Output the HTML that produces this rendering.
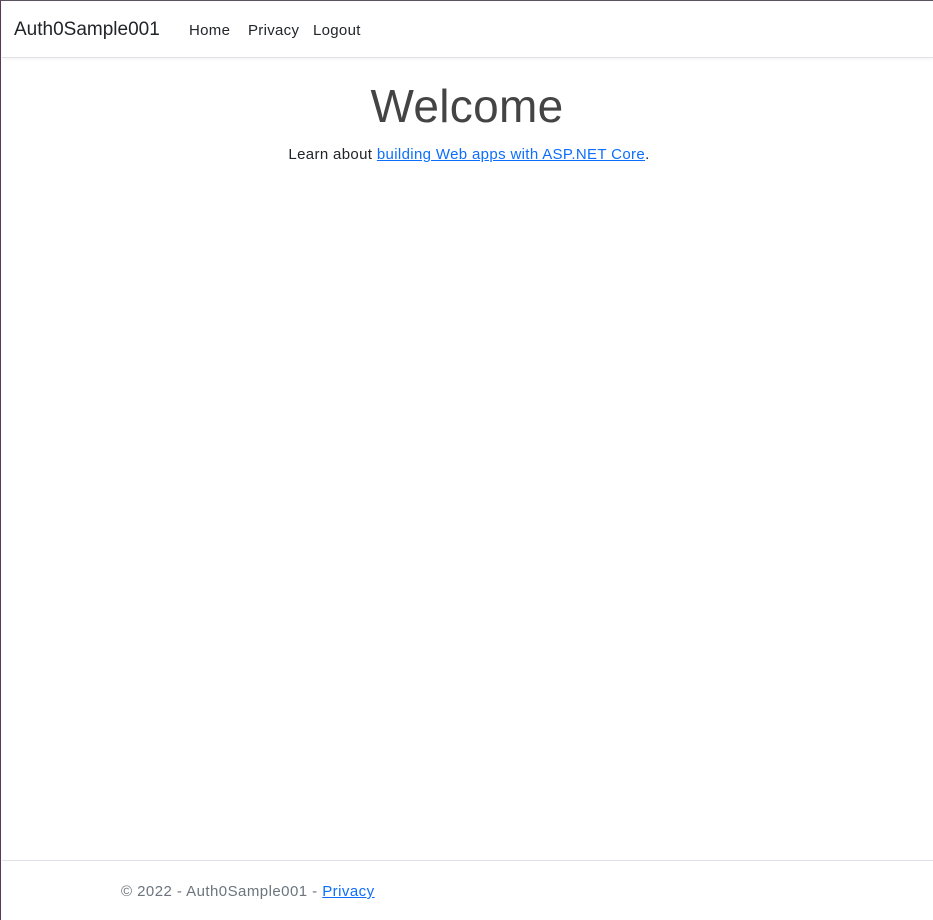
<!DOCTYPE html>
<html><head><style>
html,body{margin:0;padding:0;}
body{width:933px;height:920px;position:relative;overflow:hidden;background:#fff;font-family:"Liberation Sans",sans-serif;color:#212529;box-sizing:border-box;border-top:1px solid #5a5560;border-left:1px solid #5a3a55;}
.nav{position:absolute;top:1px;left:1px;right:0;height:55px;border-bottom:1px solid #dee2e6;box-shadow:0 1px 4px rgba(0,0,0,.06);}
.brand{position:absolute;left:12px;top:17px;font-size:19px;}
.links{position:absolute;left:187px;top:20px;font-size:15px;letter-spacing:0.3px;}
.links span{position:absolute;white-space:nowrap;}
h1{position:absolute;top:78px;left:0;right:0;text-align:center;font-weight:300;font-size:46px;margin:0;color:#444;letter-spacing:0.3px;}
.lead{position:absolute;top:145px;left:0;right:0;text-align:center;font-size:15px;letter-spacing:0.35px;padding-left:4px;}
a{color:#0d6efd;text-decoration:underline;}
.foot{position:absolute;top:859px;left:1px;right:0;border-top:1px solid #dee2e6;}
.ft{position:absolute;left:120px;top:882px;font-size:15px;color:#6c757d;letter-spacing:0.45px;}
</style></head><body>
<div class="nav"><div class="brand">Auth0Sample001</div><div class="links"><span style="left:0">Home</span><span style="left:59px">Privacy</span><span style="left:124px">Logout</span></div></div>
<h1>Welcome</h1>
<div class="lead">Learn about <a>building Web apps with ASP.NET Core</a>.</div>
<div class="foot"></div>
<div class="ft">© 2022 - Auth0Sample001 - <a>Privacy</a></div>
</body></html>
